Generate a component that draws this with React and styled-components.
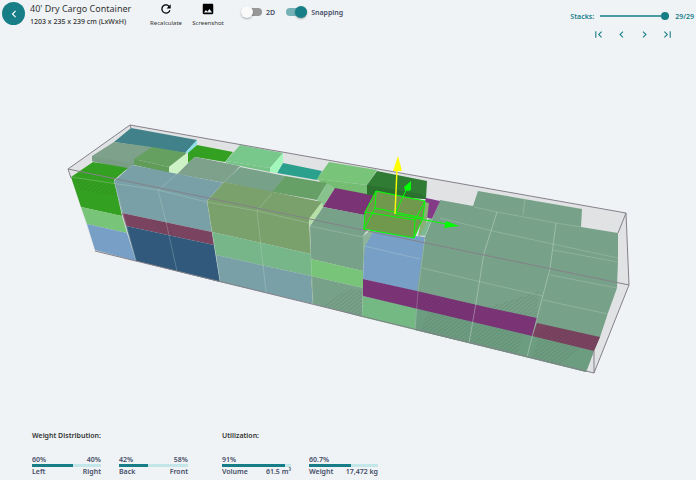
import React, { useState } from "react";
import styled, { createGlobalStyle } from "styled-components";
import {
  MdChevronLeft,
  MdChevronRight,
  MdFirstPage,
  MdImage,
  MdLastPage,
  MdRefresh,
} from "react-icons/md";

const TOTAL_STACKS = 29;

const distribution = [
  { id: "side", top: ["60%", "40%"], value: 60, bottom: ["Left", "Right"] },
  { id: "axis", top: ["42%", "58%"], value: 42, bottom: ["Back", "Front"] },
];

const utilization = [
  { id: "volume", top: ["91%"], value: 91, bottom: ["Volume", "61.5 m³"] },
  { id: "weight", top: ["60.7%"], value: 61, bottom: ["Weight", "17,472 kg"] },
];

const color = {
  sage: "#77a188",
  green: "#34a021",
  light: "#78c478",
  mint: "#76b689",
  steel: "#78a0a6",
  blue: "#78a0c6",
  navy: "#30597b",
  maroon: "#7a4460",
  purple: "#7a3476",
  olive: "#7aa16c",
};

// faces of the load, painted from the back to the front
const faces = [
  // back row
  ["131,128 197,140 185,153 114,142", "#41828a"],
  ["197,140 197,144 189,153 185,153", "#8adfe8"],
  ["197,145 233,152 225,162 195,157 188,163 188,153", color.green],
  ["114,142 152,147 134,165 127,170 92,161 92,156", "#7ea18b"],
  ["92,156 134,164 127,170 92,161", "#799d85"],
  ["195,157 240,166 225,183 177,174 188,163", "#7ea18b"],
  ["152,147 187,153 169,167 134,159", "#66a060"],
  ["134,159 169,167 169,173 134,165", "#619c59"],
  ["187,153 188,163 177,174 169,173 169,167", "#cdf2c5"],
  ["283,163 322,171 317,180 277,173", "#2aa08d"],
  ["240,167 285,176 272,193 224,182", color.sage],
  ["240,145 283,153 270,168 226,161", "#79c88b"],
  ["226,161 270,168 270,172 226,163", "#75c386"],
  ["283,153 283,162 277,173 270,172 270,168", "#a2f8bb"],
  ["329,162 377,170 367,185 317,179", color.light],
  ["317,179 367,185 367,195 335,189 327,187", "#75bd73"],
  ["285,176 327,183 317,200 272,192", "#66a066"],
  ["327,183 335,188 323,207 317,200", "#88c38d"],
  // front left column
  ["93,162 128,168 114,180 122,216 81,207 71,177", color.green],
  ["81,207 122,216 127,233 87,224", color.light],
  ["87,224 127,233 136,261 95,250", color.blue],
  // steel and navy columns
  ["132,165 224,183 207,201 212,232 122,213 114,181", color.steel],
  ["122,213 212,232 214,245 126,226", color.maroon],
  ["126,226 214,245 220,282 136,261", color.navy],
  // olive columns
  ["224,182 322,202 309,219 311,254 212,232 207,201", color.olive],
  ["212,232 311,254 311,276 216,255", color.mint],
  ["216,255 311,276 313,304 220,282", color.steel],
  // middle columns
  ["335,188 382,197 374,217 323,207", color.purple],
  ["323,207 376,217 363,236 363,271 311,259 310,226", color.sage],
  ["322,202 323,207 310,226 309,219", "#b4dfa5"],
  ["311,259 363,271 363,288 311,276", color.light],
  ["311,276 363,288 362,317 313,304", color.sage],
  ["372,231 425,237 418,292 363,279 364,247", color.blue],
  ["372,229 375,229 365,246 363,271 363,236", "#8eb59c"],
  ["363,296 417,308 415,330 362,317", "#74b884"],
  // right side block
  [
    "440,200 473,206 478,191 582,209 581,227 618,233 618,260 617,288 608,313 600,337 594,351 586,372 415,330 417,291 425,237",
    color.sage,
  ],
  ["417,308 532,336 594,351 586,372 415,330", "#6d9d81"],
  ["363,279 417,291 490,308 537,318 532,336 363,296", color.purple],
  ["537,323 600,337 594,351 532,336", color.maroon],
  ["426,198 440,201 432,219 420,216", "#833b87"],
  ["377,171 427,181 426,199 367,194 367,185", "#317c34"],
  ["367,185 421,194 426,199 367,195", "#2b702e"],
  ["425,202 429,203 425,235 418,236", "#8bae77"],
  ["429,218 432,219 425,236 420,235", "#7db992"],
];

const hatched = [
  "75,178 114,185 115,196 80,190",
  "150,219 171,223 173,236 162,234",
  "417,292 478,305 474,322 417,308",
  "548,325 600,337 594,351 535,337",
  "350,288 363,291 362,317 320,306",
  "428,312 522,334 518,354 420,331",
  "538,338 580,348 560,365 533,358",
  "485,308 538,292 537,317",
];

const seams = [
  "71,177 158,190 207,202 257,211 309,223",
  "177,174 158,190 166,222 177,271",
  "224,182 240,167",
  "272,193 257,211 263,265 266,292",
  "132,165 114,181 136,260",
  "224,182 207,201 220,281",
  "309,223 311,259 313,304",
  "309,226 363,237",
  "364,246 420,259",
  "425,237 418,292 415,330",
  "440,218 497,232 618,258",
  "553,250 618,262",
  "422,268 490,284 543,296",
  "543,300 608,314",
  "550,275 617,288",
  "474,207 497,212 556,223 581,227",
  "525,199 523,215",
];

const strongSeams = [
  "497,212 484,253 476,303 469,343",
  "556,223 550,269 543,295 537,318 527,357",
];

function App() {
  const [stack, setStack] = useState(TOTAL_STACKS);

  return (
    <>
      <GlobalStyle />
      <Page>
        <Header>
          <BackButton type="button" aria-label="Back">
            <MdChevronLeft />
          </BackButton>
          <Heading>
            <Title>40' Dry Cargo Container</Title>
            <Dimensions>1203 x 235 x 239 cm (LxWxH)</Dimensions>
          </Heading>
          <Tools>
            <ToolButton type="button">
              <MdRefresh />
              Recalculate
            </ToolButton>
            <ToolButton type="button">
              <MdImage />
              Screenshot
            </ToolButton>
          </Tools>
          <Switches>
            <SwitchLabel>
              <Switch type="checkbox" />
              2D
            </SwitchLabel>
            <SwitchLabel>
              <Switch type="checkbox" defaultChecked />
              Snapping
            </SwitchLabel>
          </Switches>
          <Stacks>
            <StackRow>
              <label htmlFor="stacks">Stacks:</label>
              <Range
                id="stacks"
                type="range"
                min="1"
                max={TOTAL_STACKS}
                value={stack}
                onChange={(e) => setStack(Number(e.target.value))}
              />
              <span>
                {stack}/{TOTAL_STACKS}
              </span>
            </StackRow>
            <Pager>
              <PagerButton aria-label="First" onClick={() => setStack(1)}>
                <MdFirstPage />
              </PagerButton>
              <PagerButton
                aria-label="Previous"
                onClick={() => setStack(Math.max(1, stack - 1))}
              >
                <MdChevronLeft />
              </PagerButton>
              <PagerButton
                aria-label="Next"
                onClick={() => setStack(Math.min(TOTAL_STACKS, stack + 1))}
              >
                <MdChevronRight />
              </PagerButton>
              <PagerButton
                aria-label="Last"
                onClick={() => setStack(TOTAL_STACKS)}
              >
                <MdLastPage />
              </PagerButton>
            </Pager>
          </Stacks>
        </Header>
        <Container />
        <Footer>
          <StatGroup title="Weight Distribution:" items={distribution} />
          <StatGroup title="Utilization:" items={utilization} />
        </Footer>
      </Page>
    </>
  );
}

export default App;

function StatGroup({ title, items }) {
  return (
    <section>
      <StatTitle>{title}</StatTitle>
      <StatList>
        {items.map((item) => (
          <Stat key={item.id}>
            <StatRow>
              {item.top.map((text) => (
                <span key={text}>{text}</span>
              ))}
            </StatRow>
            <Bar>
              <BarFill style={{ width: `${item.value}%` }} />
            </Bar>
            <StatRow>
              {item.bottom.map((text) => (
                <span key={text}>{text}</span>
              ))}
            </StatRow>
          </Stat>
        ))}
      </StatList>
    </section>
  );
}

function Container() {
  return (
    <Scene viewBox="0 50 696 370" role="img" aria-label="Loaded container">
      <defs>
        <pattern
          id="hatch"
          width="3"
          height="3"
          patternUnits="userSpaceOnUse"
          patternTransform="rotate(52)"
        >
          <rect width="1" height="3" fill="#000" opacity="0.08" />
        </pattern>
      </defs>
      <polygon
        points="130,125 626,213 629,285 594,373 95,251 68,169"
        fill="#e0e2e4"
      />
      {faces.map(([points, fill], i) => (
        <polygon key={i} points={points} fill={fill} />
      ))}
      {hatched.map((points) => (
        <polygon key={points} points={points} fill="url(#hatch)" />
      ))}
      <g fill="none" stroke="#d5e5dc">
        {seams.map((points) => (
          <polyline key={points} points={points} opacity="0.25" />
        ))}
        {strongSeams.map((points) => (
          <polyline key={points} points={points} opacity="0.4" />
        ))}
      </g>
      {/* container frame */}
      <g fill="none" stroke="#85808a" strokeWidth="1">
        <path d="M68 169 130 125 626 213 629 285 594 373" />
        <path d="M68 169 629 285" />
        <path d="M68 169 71 178" />
        <path d="M95 251 594 373" />
        <path d="M130 125 131 128M626 213 618 233M594 351V373" />
      </g>
      {/* selected box */}
      <polygon
        points="376,191 425,201 423,218 414,238 364,229 365,212"
        fill="#70994e"
      />
      <g fill="none" stroke="#0f0" strokeLinejoin="round">
        <path d="M376 191 425 201 415 220 365 212Z" />
        <path d="M375 208 423 218 414 238 364 229Z" />
        <path d="M376 191 375 208M425 201 423 218M415 220 414 238M365 212 364 229" />
        <path d="M395 214 407 188M395 214 446 224" />
      </g>
      <path
        d="M411 181 404 187 405 190 408 191 411 190ZM459 226 446 221 444 228Z"
        fill="#0f0"
      />
      <path d="M395 214 397 169" stroke="#ff0" strokeWidth="1.4" />
      <path d="M398 156 393 171 402 171Z" fill="#ff0" />
    </Scene>
  );
}

const GlobalStyle = createGlobalStyle`
  * {
    box-sizing: border-box;
  }

  body {
    margin: 0;
    background: #eff3f6;
    color: #333;
    font-family: "Noto Sans", "Open Sans", sans-serif;
  }
`;

const Page = styled.div`
  display: flex;
  flex-direction: column;
  min-height: 100vh;
`;

const Header = styled.header`
  display: flex;
  align-items: flex-start;
  height: 50px;
  padding: 2px 2px 0;
`;

const Button = styled.button`
  display: flex;
  align-items: center;
  padding: 0;
  border: 0;
  background: none;
  color: inherit;
  font-family: inherit;
  cursor: pointer;
`;

const BackButton = styled(Button)`
  justify-content: center;
  width: 23px;
  height: 23px;
  border-radius: 50%;
  background: #177e87;
  color: white;
  font-size: 14px;
`;

const Heading = styled.div`
  width: 115px;
  margin-left: 5px;
  white-space: nowrap;
`;

const Title = styled.h1`
  margin: 0;
  font-size: 9px;
  font-weight: normal;
  line-height: 14px;
`;

const Dimensions = styled.p`
  margin: 0;
  font-size: 7px;
  font-weight: 500;
  line-height: 11px;
`;

const Tools = styled.div`
  display: flex;
`;

const ToolButton = styled(Button)`
  flex-direction: column;
  width: 42px;
  font-size: 6px;
  line-height: 15px;
  white-space: nowrap;

  svg {
    width: 14px;
    height: 14px;
    color: black;
  }
`;

const Switches = styled.div`
  display: flex;
  gap: 11px;
  margin-left: 12px;
`;

const SwitchLabel = styled.label`
  display: flex;
  align-items: center;
  gap: 4px;
  height: 20px;
  color: #454d66;
  font-size: 7px;
  font-weight: 600;
`;

const Switch = styled.input`
  display: flex;
  align-items: center;
  appearance: none;
  width: 21px;
  height: 8px;
  margin: 0;
  border-radius: 4px;
  background: linear-gradient(#979797, #979797) 4px 0 no-repeat;

  &::before {
    content: "";
    width: 12px;
    height: 12px;
    flex-shrink: 0;
    border-radius: 50%;
    background: #fafafa;
    box-shadow: 0 1px 2px rgba(0, 0, 0, 0.3);
  }

  &:checked {
    justify-content: flex-end;
    background: #74b1b7;
  }

  &:checked::before {
    background: #177e87;
  }
`;

const Stacks = styled.div`
  margin-left: auto;
  color: #177e87;
`;

const StackRow = styled.div`
  display: flex;
  align-items: center;
  gap: 6px;
  height: 26px;
  padding-top: 2px;
  font-size: 7px;
  font-weight: 600;
`;

const Range = styled.input`
  appearance: none;
  width: 69px;
  height: 8px;
  margin: 0;
  background: linear-gradient(#4b9ba2, #4b9ba2) center / 100% 2px no-repeat;

  &::-webkit-slider-thumb {
    appearance: none;
    width: 8px;
    height: 8px;
    border-radius: 50%;
    background: #177e87;
  }
`;

const Pager = styled.div`
  display: flex;
  justify-content: flex-end;
  gap: 10px;
  padding-right: 20px;
`;

const PagerButton = styled(Button)`
  svg {
    width: 13px;
    height: 13px;
  }
`;

const Scene = styled.svg`
  display: block;
  width: 100%;
`;

const Footer = styled.footer`
  display: flex;
  gap: 34px;
  padding: 10px 32px 4px;
`;

const StatTitle = styled.h2`
  margin: 0 0 13px;
  font-size: 7px;
  font-weight: 600;
  line-height: 12px;
`;

const StatList = styled.div`
  display: flex;
  gap: 18px;
`;

const Stat = styled.div`
  width: 69px;
  color: #454d66;
  font-size: 7px;
  font-weight: 600;
`;

const StatRow = styled.div`
  display: flex;
  justify-content: space-between;
  line-height: 9px;
  white-space: nowrap;
`;

const Bar = styled.div`
  height: 3px;
  background: #c3e6e8;
`;

const BarFill = styled.div`
  height: 100%;
  background: #177e87;
`;
